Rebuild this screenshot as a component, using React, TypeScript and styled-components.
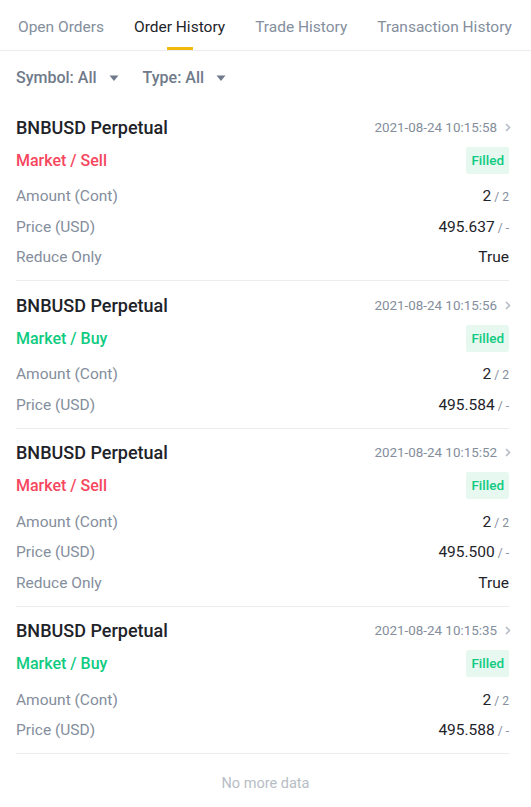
import React from "react";
import styled, { createGlobalStyle } from "styled-components";

const GlobalStyle = createGlobalStyle`
  body {
    margin: 0;
    background: #ffffff;
    font-family: Roboto, "Noto Sans", sans-serif;
    -webkit-font-smoothing: antialiased;
  }
`;

const Page = styled.div`
  width: 531px;
  background: #ffffff;
`;

const Tabs = styled.div`
  display: flex;
  gap: 30px;
  height: 51px;
  padding-left: 18px;
  padding-top: 3px;
  border-bottom: 1px solid #eaecef;
  box-sizing: border-box;
`;

const Tab = styled.div<{ $active?: boolean }>`
  position: relative;
  display: flex;
  align-items: center;
  font-size: 15.5px;
  color: ${p => (p.$active ? "#1e2329" : "#848e9c")};
  white-space: nowrap;

  &::after {
    content: "";
    display: ${p => (p.$active ? "block" : "none")};
    position: absolute;
    left: 50%;
    bottom: 0;
    width: 26px;
    height: 3px;
    margin-left: -13px;
    background: #f0b90b;
  }
`;

const Filters = styled.div`
  display: flex;
  gap: 24px;
  padding: 15px 16px 0;
  height: 52px;
  box-sizing: border-box;
  align-items: flex-start;
`;

const Filter = styled.div`
  display: flex;
  align-items: center;
  gap: 12px;
  font-size: 16px;
  font-weight: 500;
  color: #707a8a;
  line-height: 24px;
`;

const Caret = () => (
  <svg width="10" height="7" viewBox="0 0 10 7">
    <path d="M0.5 0.5h9L5 6z" fill="#707a8a" />
  </svg>
);

const List = styled.div`
  padding: 0 22px 0 16px;
`;

const Card = styled.div`
  padding: 12px 0 7.5px;
  border-bottom: 1px solid #eaecef;
`;

const HeadRow = styled.div`
  display: flex;
  justify-content: space-between;
  align-items: center;
  height: 24px;
`;

const Title = styled.div`
  font-size: 18px;
  font-weight: 500;
  color: #1e2329;
`;

const DateLink = styled.div`
  display: flex;
  align-items: center;
  gap: 8px;
  margin-right: -2px;
  font-size: 13.4px;
  color: #848e9c;
`;

const Chevron = () => (
  <svg width="6" height="9" viewBox="0 0 6 9">
    <path d="M1 1l3.5 3.5L1 8" stroke="#b7bdc6" strokeWidth="1.6" fill="none" />
  </svg>
);

const SideRow = styled.div`
  display: flex;
  justify-content: space-between;
  align-items: center;
  margin-top: 7px;
  height: 28px;
`;

const Side = styled.div<{ $buy: boolean }>`
  font-size: 16px;
  font-weight: 500;
  color: ${p => (p.$buy ? "#0ecb81" : "#f6465d")};
`;

const Badge = styled.div`
  background: #e7f8f0;
  color: #0ecb81;
  font-size: 13.5px;
  font-weight: 500;
  height: 27px;
  line-height: 27px;
  padding: 0 5px;
  border-radius: 2px;
`;

const Rows = styled.div`
  margin-top: 7px;
`;

const Row = styled.div`
  display: flex;
  justify-content: space-between;
  align-items: center;
  height: 30.5px;
`;

const Label = styled.div`
  font-size: 15.5px;
  color: #848e9c;
`;

const Value = styled.div`
  font-size: 15.5px;
  color: #1e2329;
`;

const Total = styled.span`
  font-size: 12px;
  color: #848e9c;
  margin-left: 3px;
`;

const NoMore = styled.div`
  text-align: center;
  font-size: 14.5px;
  color: #b7bdc6;
  padding: 21px 0 30px;
`;

type Order = {
  time: string;
  buy: boolean;
  price: string;
  reduceOnly: boolean;
};

const orders: Order[] = [
  { time: "2021-08-24 10:15:58", buy: false, price: "495.637", reduceOnly: true },
  { time: "2021-08-24 10:15:56", buy: true, price: "495.584", reduceOnly: false },
  { time: "2021-08-24 10:15:52", buy: false, price: "495.500", reduceOnly: true },
  { time: "2021-08-24 10:15:35", buy: true, price: "495.588", reduceOnly: false },
];

const OrderCard = ({ order }: { order: Order }) => (
  <Card>
    <HeadRow>
      <Title>BNBUSD Perpetual</Title>
      <DateLink>
        {order.time}
        <Chevron />
      </DateLink>
    </HeadRow>
    <SideRow>
      <Side $buy={order.buy}>{order.buy ? "Market / Buy" : "Market / Sell"}</Side>
      <Badge>Filled</Badge>
    </SideRow>
    <Rows>
      <Row>
        <Label>Amount (Cont)</Label>
        <Value>
          2<Total>/ 2</Total>
        </Value>
      </Row>
      <Row>
        <Label>Price (USD)</Label>
        <Value>
          {order.price}
          <Total>/ -</Total>
        </Value>
      </Row>
      {order.reduceOnly && (
        <Row>
          <Label>Reduce Only</Label>
          <Value>True</Value>
        </Row>
      )}
    </Rows>
  </Card>
);

const App = () => (
  <Page>
    <GlobalStyle />
    <Tabs>
      <Tab>Open Orders</Tab>
      <Tab $active>Order History</Tab>
      <Tab>Trade History</Tab>
      <Tab>Transaction History</Tab>
    </Tabs>
    <Filters>
      <Filter>
        Symbol: All <Caret />
      </Filter>
      <Filter>
        Type: All <Caret />
      </Filter>
    </Filters>
    <List>
      {orders.map((o, i) => (
        <OrderCard key={i} order={o} />
      ))}
    </List>
    <NoMore>No more data</NoMore>
  </Page>
);

export default App;
